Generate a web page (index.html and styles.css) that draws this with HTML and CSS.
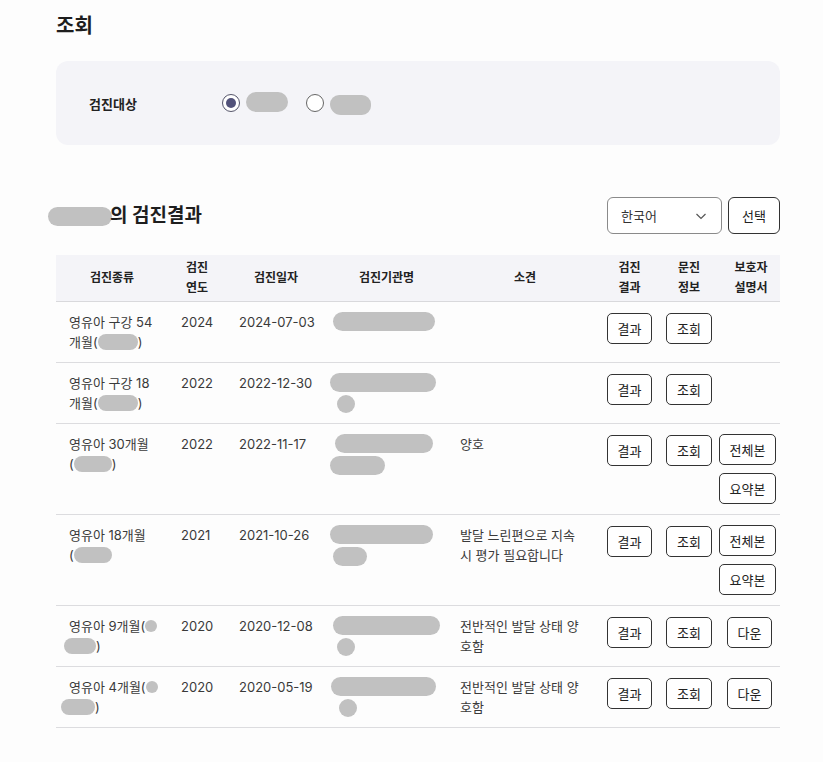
FILE: index.html
```html
<!DOCTYPE html>
<html lang="ko">
<head>
<meta charset="utf-8">
<title>조회</title>
<link rel="stylesheet" href="styles.css">
</head>
<body>
<main class="page">
  <h1 class="page-title">조회</h1>

  <section class="filter-box">
    <span class="filter-label">검진대상</span>
    <div class="radio-group">
      <label class="radio-item">
        <span class="radio checked"></span>
        <span class="blob blob-radio"></span>
      </label>
      <label class="radio-item">
        <span class="radio"></span>
        <span class="blob blob-radio2"></span>
      </label>
    </div>
  </section>

  <section class="result-head">
    <h2 class="result-title"><span class="blob blob-name"></span>의 검진결과</h2>
    <div class="result-actions">
      <div class="select">
        <span>한국어</span>
        <svg class="chevron" width="12" height="12" viewBox="0 0 12 12"><polyline points="1.5,4 6,8.5 10.5,4" fill="none" stroke="#555" stroke-width="1.2"/></svg>
      </div>
      <button class="btn btn-select">선택</button>
    </div>
  </section>

  <table class="result-table">
    <colgroup>
      <col class="c1"><col class="c2"><col class="c3"><col class="c4"><col class="c5"><col class="c6"><col class="c7"><col class="c8">
    </colgroup>
    <thead>
      <tr>
        <th>검진종류</th>
        <th>검진<br>연도</th>
        <th>검진일자</th>
        <th>검진기관명</th>
        <th>소견</th>
        <th>검진<br>결과</th>
        <th>문진<br>정보</th>
        <th>보호자<br>설명서</th>
      </tr>
    </thead>
    <tbody>
      <tr>
        <td class="kind">영유아 구강 54<br>개월(<span class="blob blob-in w40"></span>)</td>
        <td class="nw">2024</td>
        <td class="nw">2024-07-03</td>
        <td class="org"><span class="blob blob-org w102"></span></td>
        <td></td>
        <td class="act"><button class="btn">결과</button></td>
        <td class="act"><button class="btn">조회</button></td>
        <td class="act last"></td>
      </tr>
      <tr>
        <td class="kind">영유아 구강 18<br>개월(<span class="blob blob-in w40"></span>)</td>
        <td class="nw">2022</td>
        <td class="nw">2022-12-30</td>
        <td class="org"><span class="blob blob-org w106 shift3"></span><span class="blob blob-org dot"></span></td>
        <td></td>
        <td class="act"><button class="btn">결과</button></td>
        <td class="act"><button class="btn">조회</button></td>
        <td class="act last"></td>
      </tr>
      <tr>
        <td class="kind">영유아 30개월<br>(<span class="blob blob-in w38"></span>)</td>
        <td class="nw">2022</td>
        <td class="nw">2022-11-17</td>
        <td class="org"><span class="blob blob-org w98 r2"></span><span class="blob blob-org w55"></span></td>
        <td>양호</td>
        <td class="act"><button class="btn">결과</button></td>
        <td class="act"><button class="btn">조회</button></td>
        <td class="act last"><div class="stack"><button class="btn">전체본</button><button class="btn">요약본</button></div></td>
      </tr>
      <tr>
        <td class="kind">영유아 18개월<br>(<span class="blob blob-in w38"></span></td>
        <td class="nw">2021</td>
        <td class="nw">2021-10-26</td>
        <td class="org"><span class="blob blob-org w103"></span><span class="blob blob-org w34"></span></td>
        <td>발달 느린편으로 지속<br>시 평가 필요합니다</td>
        <td class="act"><button class="btn">결과</button></td>
        <td class="act"><button class="btn">조회</button></td>
        <td class="act last"><div class="stack"><button class="btn">전체본</button><button class="btn">요약본</button></div></td>
      </tr>
      <tr>
        <td class="kind"><span class="nowrap">영유아 9개월(<span class="blob blob-in dot-s"></span></span><br><span class="blob blob-in w32 pull5"></span>)</td>
        <td class="nw">2020</td>
        <td class="nw">2020-12-08</td>
        <td class="org"><span class="blob blob-org w107"></span><span class="blob blob-org dot"></span></td>
        <td>전반적인 발달 상태 양<br>호함</td>
        <td class="act"><button class="btn">결과</button></td>
        <td class="act"><button class="btn">조회</button></td>
        <td class="act last down"><button class="btn">다운</button></td>
      </tr>
      <tr>
        <td class="kind"><span class="nowrap">영유아 4개월(<span class="blob blob-in dot-s"></span></span><br><span class="blob blob-in w34 pull8"></span>)</td>
        <td class="nw">2020</td>
        <td class="nw">2020-05-19</td>
        <td class="org"><span class="blob blob-org w105"></span><span class="blob blob-org dot shift2"></span></td>
        <td>전반적인 발달 상태 양<br>호함</td>
        <td class="act"><button class="btn">결과</button></td>
        <td class="act"><button class="btn">조회</button></td>
        <td class="act last down"><button class="btn">다운</button></td>
      </tr>
    </tbody>
  </table>
</main>
</body>
</html>
```

FILE: styles.css
```css
* { box-sizing: border-box; }

html, body {
  margin: 0;
  padding: 0;
  background: #fdfdfd;
}

body {
  font-family: "Inter", "Noto Sans CJK KR", "Noto Sans", sans-serif;
  color: #333;
  font-size: 13px;
}

.page {
  padding: 12px 43px 34px 56px;
}

.page-title {
  margin: 0;
  font-size: 20px;
  line-height: 28px;
  font-weight: 700;
  color: #1e1e1e;
}

.filter-box {
  margin-top: 21px;
  height: 84px;
  background: #f4f4f8;
  border-radius: 12px;
  padding: 0 33px;
  display: flex;
  align-items: center;
}

.filter-label {
  width: 133px;
  font-size: 13px;
  font-weight: 700;
  color: #222;
}

.radio-group {
  display: flex;
  align-items: center;
  gap: 18px;
}

.radio-item {
  display: flex;
  align-items: center;
  gap: 6px;
}

.radio {
  width: 18px;
  height: 18px;
  border-radius: 50%;
  border: 1.5px solid #666;
  background: #fff;
  display: inline-block;
  position: relative;
}

.radio.checked {
  border-color: #55556a;
}

.radio.checked::after {
  content: "";
  position: absolute;
  left: 2.5px;
  top: 2.5px;
  width: 10px;
  height: 10px;
  border-radius: 50%;
  background: #52527a;
}

.blob {
  display: inline-block;
  background: #c1c1c1;
  border-radius: 10px;
}

.blob-radio { width: 42px; height: 20px; margin-top: -3px; }
.blob-radio2 { width: 41px; height: 20px; margin-top: 3px; border-radius: 10px 10px 10px 12px; }

.result-head {
  margin-top: 52px;
  height: 37px;
  display: flex;
  align-items: center;
  justify-content: space-between;
}

.result-title {
  margin: 0;
  font-size: 19px;
  line-height: 26px;
  font-weight: 700;
  color: #1e1e1e;
  display: flex;
  align-items: center;
}

.blob-name {
  width: 64px;
  height: 19px;
  margin-left: -8px;
  margin-right: -2px;
  margin-top: 2px;
}

.result-actions {
  display: flex;
  gap: 6px;
}

.select {
  width: 115px;
  height: 37px;
  border: 1px solid #8a8a8a;
  border-radius: 6px;
  background: #fff;
  padding: 0 14px 0 13px;
  display: flex;
  align-items: center;
  justify-content: space-between;
  font-size: 13px;
  color: #333;
}

.chevron { margin-top: 1px; }

.btn {
  font-family: inherit;
  font-size: 13px;
  color: #222;
  background: #fff;
  border: 1px solid #333;
  border-radius: 5px;
  height: 31px;
  padding: 0 10px;
  cursor: pointer;
  white-space: nowrap;
}

.btn-select {
  height: 37px;
  width: 52px;
  border-radius: 6px;
  padding: 0;
}

.result-table {
  margin-top: 21px;
  width: 724px;
  border-collapse: collapse;
  table-layout: fixed;
}

.c1 { width: 112px; }
.c2 { width: 58px; }
.c3 { width: 100px; }
.c4 { width: 121px; }
.c5 { width: 156px; }
.c6 { width: 53px; }
.c7 { width: 66px; }
.c8 { width: 58px; }

.result-table th {
  background: #f4f4f8;
  font-size: 12px;
  font-weight: 700;
  color: #222;
  line-height: 20px;
  padding: 3px 0;
  text-align: center;
  border-bottom: 1px solid #d9d9dc;
  vertical-align: middle;
}

.result-table td {
  vertical-align: top;
  padding: 10px 13px;
  line-height: 20px;
  font-size: 13px;
  color: #3a3a3a;
  border-bottom: 1px solid #dcdcdf;
}

.result-table td.kind {
  padding-right: 4px;
}

.result-table td.nw {
  white-space: nowrap;
  padding-right: 0;
}

.nowrap { white-space: nowrap; }

.result-table td.act {
  padding: 11px 0 10px;
  text-align: center;
}

.result-table td.act.last {
  padding: 10px 7px 10px 0;
}

.result-table td.act.last.down {
  padding: 11px 3px 10px 0;
}

.stack {
  display: flex;
  flex-direction: column;
  align-items: center;
  gap: 8px;
}

.blob-in {
  height: 16px;
  vertical-align: -3px;
  border-radius: 8px;
}

.w40 { width: 40px; }
.w38 { width: 38px; }
.w32 { width: 32px; }
.w34 { width: 34px; }
.dot-s { width: 12px; height: 12px; vertical-align: -1px; border-radius: 50%; }
.pull5 { margin-left: -5px; }
.pull8 { margin-left: -8px; }

.org { padding-left: 7px !important; }

.blob-org {
  display: block;
  height: 19px;
}

.blob-org + .blob-org { margin-top: 3px; }

.w102 { width: 102px; }
.w106 { width: 106px; }
.w98 { width: 98px; }
.w55 { width: 55px; margin-left: -3px; }
.w103 { width: 103px; margin-left: -3px; }
.w107 { width: 107px; }
.w105 { width: 105px; margin-left: -2px; }
.shift3 { margin-left: -3px; }
.shift2 { margin-left: 6px !important; }
.r2 { margin-left: 2px; }
.dot { width: 18px; height: 18px; border-radius: 50%; margin-left: 4px; }
```
